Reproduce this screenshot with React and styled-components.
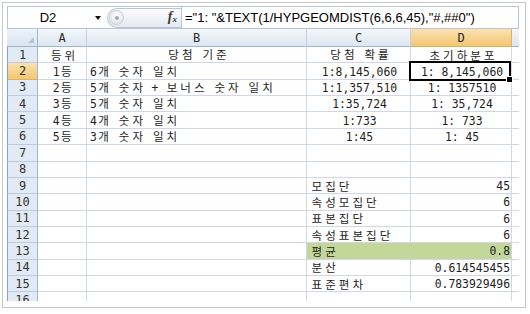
import React from 'react';
import styled, { createGlobalStyle } from 'styled-components';

const UI_FONT = `"Liberation Sans", Arial, sans-serif`;
const MONO_FONT = `"DejaVu Sans Mono", "Liberation Mono", monospace`;
const HAN_FONT = `"Noto Sans CJK KR", "Noto Sans", sans-serif`;
const GRID = '#d0d7e5';

const GlobalStyle = createGlobalStyle`
  html, body { margin: 0; padding: 0; background: #fff; }
  body { width: 530px; height: 314px; overflow: hidden; }
`;

const Frame = styled.div`
  box-sizing: border-box;
  margin: 2px 0 0 2px;
  width: 524px;
  height: 306px;
  border: 1px solid #c8c8c8;
  padding: 3px 6px 6px 4px;
`;

const Sheet = styled.div`
  width: 100%;
  height: 100%;
  overflow: hidden;
  display: flex;
  flex-direction: column;
`;

const FormulaBar = styled.div`
  box-sizing: border-box;
  flex: 0 0 23px;
  display: flex;
  align-items: center;
  border: 1px solid #b9c5d6;
  background: #fff;
`;

const NameBox = styled.div`
  flex: 0 0 95px;
  display: flex;
  align-items: center;
`;

const NameText = styled.span`
  flex: 0 0 80px;
  text-align: center;
  font: 13px/15px ${UI_FONT};
  color: #000;
`;

const DropArrow = styled.span`
  margin-left: 7px;
  width: 0;
  height: 0;
  border-left: 3.5px solid transparent;
  border-right: 3.5px solid transparent;
  border-top: 4px solid #111;
`;

const FxGroup = styled.div`
  box-sizing: border-box;
  margin-left: 4px;
  flex: 0 0 74px;
  height: 20px;
  display: flex;
  align-items: center;
  border: 1px solid #b9c5d6;
  border-right: none;
  border-radius: 10px 0 0 10px;
  background: linear-gradient(#fdfdfe, #e4e9f0);
`;

const Knob = styled.span`
  box-sizing: border-box;
  margin-left: 1px;
  width: 15px;
  height: 15px;
  border-radius: 50%;
  border: 1px solid #c7cfda;
  background: radial-gradient(circle at 50% 35%, #ffffff, #d8dee6);
  display: flex;
  align-items: center;
  justify-content: center;
`;

const KnobDot = styled.span`
  width: 4px;
  height: 4px;
  border-radius: 50%;
  background: #a3a9b2;
`;

const FxLabel = styled.span`
  margin-left: auto;
  margin-right: 4px;
  font-family: "Liberation Serif", "Times New Roman", serif;
  font-style: italic;
  font-weight: bold;
  color: #3a3a3a;
  font-size: 14px;
  line-height: 14px;
  & sub {
    font-size: 9px;
    vertical-align: baseline;
    position: relative;
    top: 1px;
  }
`;

const FormulaInput = styled.div`
  flex: 1;
  align-self: stretch;
  display: flex;
  align-items: center;
  padding-left: 3px;
  border-left: 1px solid #b9c5d6;
  font: 13px/15px ${UI_FONT};
  color: #000;
  white-space: nowrap;
  overflow: hidden;
`;

const Grid = styled.div`
  display: grid;
  grid-template-columns: 31px 49px 220px 104px 101px 30px;
  grid-template-rows: 18px repeat(16, 16.37px);
  width: max-content;
`;

const Corner = styled.div`
  box-sizing: border-box;
  position: relative;
  border-right: 1px solid #9eb6ce;
  border-bottom: 1px solid #9eb6ce;
  background: linear-gradient(#eef3f9, #dbe4f0);
  &::after {
    content: '';
    position: absolute;
    right: 3px;
    bottom: 3px;
    width: 0;
    height: 0;
    border-left: 6px solid transparent;
    border-bottom: 6px solid #b4c2d6;
  }
`;

const ColHead = styled.div`
  box-sizing: border-box;
  border-right: 1px solid ${p => (p.$selected ? '#e2b15a' : '#c3d0e2')};
  border-bottom: 1px solid ${p => (p.$selected ? '#e2b15a' : '#9eb6ce')};
  background: ${p =>
    p.$selected ? 'linear-gradient(#fbe2b2, #f3c673)' : 'linear-gradient(#f4f7fb, #dde6f1)'};
  display: flex;
  align-items: center;
  justify-content: center;
  font: 12px/14px ${MONO_FONT};
  color: #2a2a2a;
  overflow: hidden;
`;

const RowHead = styled.div`
  box-sizing: border-box;
  border-left: 1px solid #7fa2d4;
  border-right: 1px solid #9eb6ce;
  border-bottom: 1px solid ${p => (p.$selected ? '#e2b15a' : '#bccbe0')};
  background: ${p =>
    p.$selected ? 'linear-gradient(#fbe2b2, #f3c673)' : '#e2eaf5'};
  display: flex;
  align-items: center;
  justify-content: center;
  font: 12px/14px ${MONO_FONT};
  color: #333;
`;

const justify = { left: 'flex-start', center: 'center', right: 'flex-end' };

const Cell = styled.div`
  box-sizing: border-box;
  position: relative;
  border-right: 1px solid ${p => p.$joinRight || GRID};
  border-bottom: 1px solid ${GRID};
  background: ${p => p.$fill || '#fff'};
  display: flex;
  align-items: center;
  justify-content: ${p => justify[p.$align || 'left']};
  padding: 0 1px 0 3px;
  color: #1e1e1e;
`;

const CellValue = styled.span`
  display: block;
  white-space: nowrap;
  line-height: 14px;
`;

/* Gulim-like metrics: half-width Latin, full-width Hangul */
const Glyph = styled.span`
  display: inline-block;
  width: ${p => (p.$wide ? 13.65 : 6.85)}px;
  text-align: center;
  line-height: 14px;
  font-family: ${p => (p.$wide ? HAN_FONT : MONO_FONT)};
  font-size: ${p => (p.$wide ? 11.5 : 11.4)}px;
`;

const Selection = styled.div`
  position: absolute;
  top: -2px;
  left: -2px;
  right: 0;
  bottom: -2px;
  border: 2px solid #000;
  pointer-events: none;
  z-index: 2;
`;

const FillHandle = styled.span`
  position: absolute;
  right: -4px;
  bottom: -4px;
  width: 5px;
  height: 5px;
  background: #000;
  border: 1px solid #fff;
`;

const isWide = ch => /[\u1100-\u11ff\u3130-\u318f\uac00-\ud7a3]/.test(ch);

function CellText({ text }) {
  if (!text) return null;
  return (
    <CellValue>
      {Array.from(text).map((ch, i) => (
        <Glyph key={i} $wide={isWide(ch)}>
          {ch === ' ' ? '\u00a0' : ch}
        </Glyph>
      ))}
    </CellValue>
  );
}

const rows = [
  { a: '등위', b: '당첨 기준', c: '당첨 확률', d: '초기하분포', head: true },
  { a: '1등', b: '6개 숫자 일치', c: '1:8,145,060', d: '1: 8,145,060', active: true },
  { a: '2등', b: '5개 숫자 + 보너스 숫자 일치', c: '1:1,357,510', d: '1: 1357510' },
  { a: '3등', b: '5개 숫자 일치', c: '1:35,724', d: '1: 35,724' },
  { a: '4등', b: '4개 숫자 일치', c: '1:733', d: '1: 733' },
  { a: '5등', b: '3개 숫자 일치', c: '1:45', d: '1: 45' },
  {},
  {},
  { c: '모집단', d: '45', stat: true },
  { c: '속성모집단', d: '6', stat: true },
  { c: '표본집단', d: '6', stat: true },
  { c: '속성표본집단', d: '6', stat: true },
  { c: '평균', d: '0.8', stat: true, fill: '#c4d79b' },
  { c: '분산', d: '0.614545455', stat: true },
  { c: '표준편차', d: '0.783929496', stat: true },
  {},
];

const columns = ['A', 'B', 'C', 'D', 'E'];

export default function App() {
  return (
    <>
      <GlobalStyle />
      <Frame>
        <Sheet>
          <FormulaBar>
            <NameBox>
              <NameText>D2</NameText>
              <DropArrow />
            </NameBox>
            <FxGroup>
              <Knob>
                <KnobDot />
              </Knob>
              <FxLabel>
                f<sub>x</sub>
              </FxLabel>
            </FxGroup>
            <FormulaInput>="1: "&amp;TEXT(1/HYPGEOMDIST(6,6,6,45),"#,##0")</FormulaInput>
          </FormulaBar>
          <Grid>
            <Corner />
            {columns.map(c => (
              <ColHead key={c} $selected={c === 'D'}>
                {c}
              </ColHead>
            ))}
            {rows.map((r, i) => (
              <React.Fragment key={i}>
                <RowHead $selected={i === 1}>{i + 1}</RowHead>
                <Cell $align="center">
                  <CellText text={r.a} />
                </Cell>
                <Cell $align={r.head ? 'center' : 'left'}>
                  <CellText text={r.b} />
                </Cell>
                <Cell $align={r.stat ? 'left' : 'center'} $fill={r.fill} $joinRight={r.fill}>
                  <CellText text={r.c} />
                </Cell>
                <Cell $align={r.stat ? 'right' : 'center'} $fill={r.fill}>
                  <CellText text={r.d} />
                  {r.active && (
                    <Selection>
                      <FillHandle />
                    </Selection>
                  )}
                </Cell>
                <Cell />
              </React.Fragment>
            ))}
          </Grid>
        </Sheet>
      </Frame>
    </>
  );
}
